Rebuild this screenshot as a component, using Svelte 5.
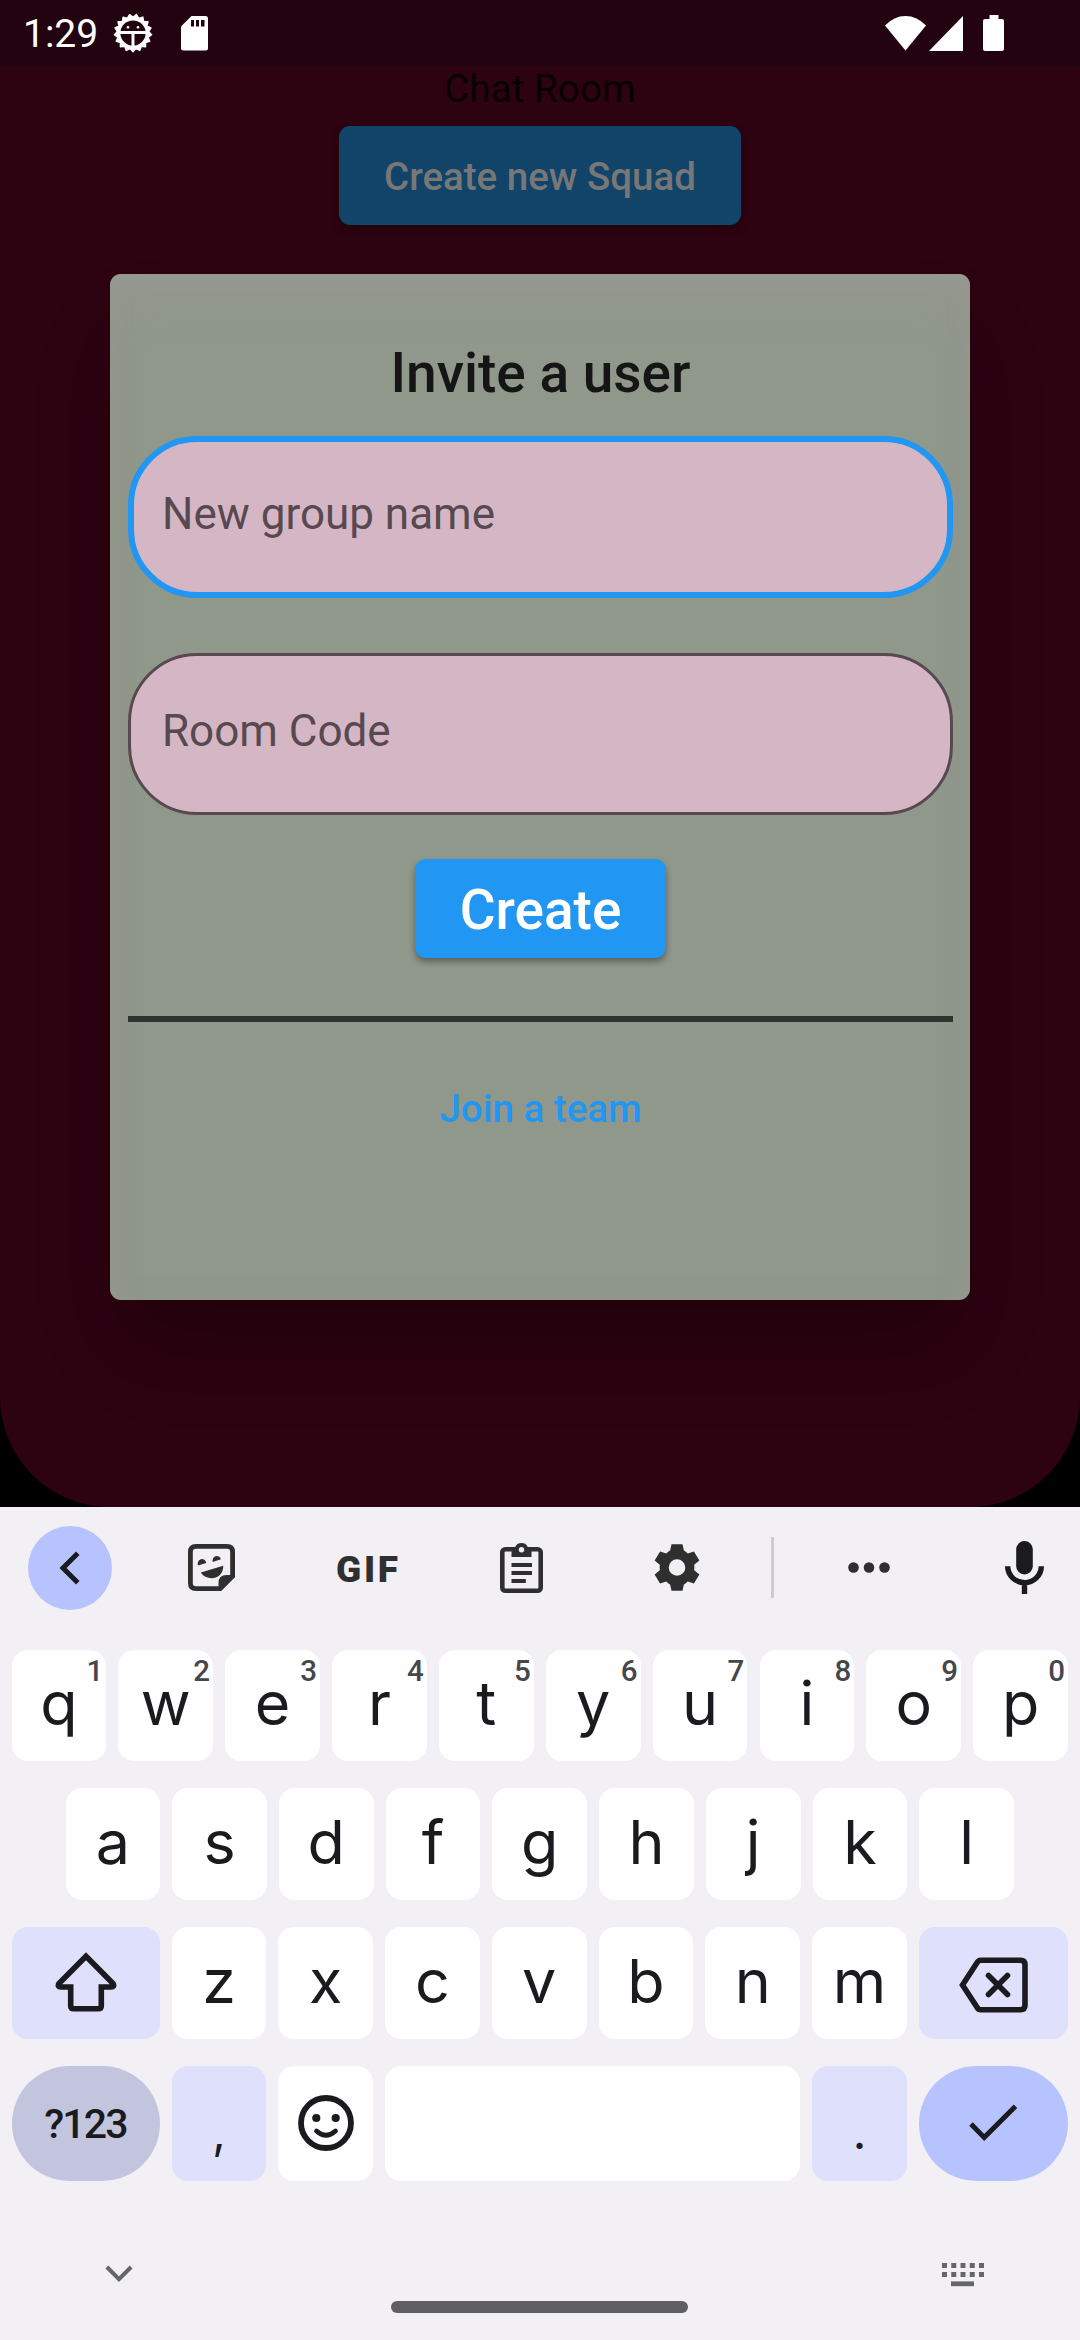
<script>
  const topRow = [...'qwertyuiop'].map((letter, i) => ({ letter, hint: String((i + 1) % 10) }));
  const homeRow = [...'asdfghjkl'];
  const bottomRow = [...'zxcvbnm'];

  // Spiked outline of the debug badge
  const teeth = 17;
  const spikes = Array.from({ length: teeth * 2 }, (_, i) => {
    const angle = (Math.PI * i) / teeth + Math.PI / 2;
    const r = i % 2 ? 15.6 : 18.6;
    return `${(20 + r * Math.cos(angle)).toFixed(2)},${(20 + r * Math.sin(angle)).toFixed(2)}`;
  }).join(' ');
</script>

<div class="phone">
  <div class="app-frame">
    <div class="app">
      <header class="status">
        <span class="time">1:29</span>
        <svg class="bug" width="40" height="40" viewBox="0 0 40 40">
          <polygon points={spikes} fill="#fff" stroke="#fff" stroke-width="1.6" stroke-linejoin="round" />
          <circle cx="20" cy="20" r="12.6" fill="#22030f" />
          <path d="M7 19.6H33M20 20V33" stroke="#fff" stroke-width="3" />
          <circle cx="15" cy="14.2" r="1.3" fill="#fff" />
          <circle cx="25" cy="14.2" r="1.3" fill="#fff" />
        </svg>
        <svg class="sd" width="27" height="35" viewBox="0 0 27 35">
          <path d="M10.500 0H24.500Q27 0 27 2.500V32Q27 34.500 24.500 34.500H2.500Q0 34.500 0 32V10.500Z" fill="#fff" />
          <path d="M10 4h3v6.500h-3zM15 4h3v6.500h-3zM20 4h3.500v6.500H20z" fill="#22030f" />
        </svg>
        <div class="status-right">
          <svg width="41" height="35" viewBox="0 0 41 35">
            <path d="M0 9.500Q9 0 20.500 0T41 9.500L20.500 34.500Z" fill="#fff" />
          </svg>
          <svg class="signal" width="34" height="35" viewBox="0 0 34 35">
            <path d="M34 0V35H0Z" fill="#fff" />
          </svg>
          <svg class="battery" width="21" height="36" viewBox="0 0 21 36">
            <path d="M6.500 0h9v4H19q2 0 2 2v28q0 2-2 2H2q-2 0-2-2V6q0-2 2-2h4.500z" fill="#fff" />
          </svg>
        </div>
      </header>

      <div class="room-title">Chat Room</div>
      <button class="squad">Create new Squad</button>

      <section class="dialog">
        <h1>Invite a user</h1>
        <div class="field focused">New group name</div>
        <div class="field second">Room Code</div>
        <button class="create">Create</button>
        <hr />
        <a class="join" href="#join">Join a team</a>
      </section>
    </div>
  </div>

  <div class="keyboard">
    <div class="toolbar">
      <span class="back">
        <svg width="22" height="34" viewBox="0 0 22 34">
          <path d="M18.800 2.200L4 17L18.800 31.800" fill="none" stroke="#1b1b1f" stroke-width="5" />
        </svg>
      </span>
      <svg width="47" height="47" viewBox="0 0 47 47" fill="#2f2f2f">
        <path d="M8 2.400H39Q44.600 2.400 44.600 8V32L32 44.600H8Q2.400 44.600 2.400 39V8Q2.400 2.400 8 2.400Z" fill="none" stroke="#2f2f2f" stroke-width="4.800" />
        <path d="M47 31V33L33 47H30.500V39Q30.500 31 38.500 31Z" />
        <path d="M10 21.500A4.300 4.600 0 1 1 18.200 19Z" />
        <path d="M24.700 18A4.300 4.600 0 1 1 33 15.300Z" />
        <path d="M12.800 28.500L35.300 21.800C35 37 18 37 12.800 28.500Z" />
      </svg>
      <svg width="72" height="52" viewBox="0 0 72 52">
        <text class="gif" x="5" y="39.500" textLength="62" lengthAdjust="spacing">GIF</text>
      </svg>
      <svg width="43" height="51" viewBox="0 0 43 51" fill="#2f2f2f">
        <rect x="2.300" y="7.300" width="38.400" height="41.400" rx="3" fill="none" stroke="#2f2f2f" stroke-width="4.600" />
        <path d="M11.500 5.500H15A7 7 0 0 1 28 5.500H31.500V15H11.500Z" />
        <circle cx="21.500" cy="7.800" r="2.700" fill="#f2f0f5" />
        <path d="M11.500 21h20.500v4H11.500zM11.500 29h20.500v4H11.500zM11.500 37h14.300v4H11.500z" />
      </svg>
      <svg width="46" height="47" viewBox="-23 -23.5 46 47">
        <path fill="#2f2f2f" fill-rule="evenodd" d="M-5.500-23.200H5.500L6.900-17Q9-16 10.700-14L16.900-16L22.400-7L17.200-2.700Q17.600 0 17.200 2.700L22.400 7L16.900 16L10.700 14Q9 16 6.900 17L5.500 23.200H-5.500L-6.900 17Q-9 16-10.700 14L-16.900 16L-22.400 7L-17.200 2.700Q-17.600 0-17.200-2.700L-22.400-7L-16.900-16L-10.700-14Q-9-16-6.900-17ZM8.300 0A8.300 8.300 0 1 0-8.300 0A8.300 8.300 0 1 0 8.300 0Z" />
      </svg>
      <span class="separator"></span>
      <svg width="42" height="11" viewBox="0 0 42 11" fill="#2f2f2f">
        <circle cx="5.500" cy="5.500" r="5.300" /><circle cx="21" cy="5.500" r="5.300" /><circle cx="36.500" cy="5.500" r="5.300" />
      </svg>
      <svg class="mic" width="39" height="53" viewBox="0 0 39 53">
        <rect x="11.200" y="0" width="16.600" height="33.500" rx="8.300" fill="#1b1b1f" />
        <path d="M2.700 25.300A16.800 16.300 0 0 0 36.300 25.300M19.500 42V53" fill="none" stroke="#1b1b1f" stroke-width="5.400" />
      </svg>
    </div>

    <div class="keys">
      <div class="row first">
        {#each topRow as key}
          <div class="key">{key.letter}<span class="hint">{key.hint}</span></div>
        {/each}
      </div>
      <div class="row home">
        {#each homeRow as letter}
          <div class="key">{letter}</div>
        {/each}
      </div>
      <div class="row with-mods">
        <div class="key mod">
          <svg width="62" height="60" viewBox="0 0 62 60">
            <path d="M31 4.200L4 31.500Q2 35 6 35H15.700V54Q15.700 56.700 18.500 56.700H43.500Q46.300 56.700 46.300 54V35H56Q60 35 58 31.500Z" fill="none" stroke="#1b1b1f" stroke-width="5.600" />
          </svg>
        </div>
        {#each bottomRow as letter}
          <div class="key">{letter}</div>
        {/each}
        <div class="key mod">
          <svg class="erase" width="69" height="56" viewBox="0 0 69 56" fill="none" stroke="#1b1b1f" stroke-width="5.600">
            <path d="M21.500 3.300H61.500Q66 3.300 66 7.800V48.200Q66 52.700 61.500 52.700H21.500Q19.500 52.700 18 50.200L3.500 28L18 5.800Q19.500 3.300 21.500 3.300Z" />
            <path d="M29.500 18.500L48.500 37.500M48.500 18.500L29.500 37.500" stroke-linecap="round" />
          </svg>
        </div>
      </div>
      <div class="row last">
        <div class="key symbols">?123</div>
        <div class="key mod punct">,</div>
        <div class="key">
          <svg width="56" height="56" viewBox="0 0 56 56">
            <circle cx="28" cy="28" r="25" fill="none" stroke="#1b1b1f" stroke-width="5.800" />
            <circle cx="18.300" cy="23" r="4.100" fill="#1b1b1f" />
            <circle cx="37.700" cy="23" r="4.100" fill="#1b1b1f" />
            <path d="M18.500 36Q28 44.500 37.500 36" fill="none" stroke="#1b1b1f" stroke-width="4.800" stroke-linecap="round" />
          </svg>
        </div>
        <div class="key space"></div>
        <div class="key mod punct">.</div>
        <div class="key enter">
          <svg width="49" height="38" viewBox="0 0 49 38">
            <path d="M2 20L15.200 33.500L46.500 2.200" fill="none" stroke="#1b1b1f" stroke-width="5" />
          </svg>
        </div>
      </div>
    </div>

    <footer class="nav">
      <svg class="collapse" width="28" height="18" viewBox="0 0 28 18">
        <path d="M1.900 2L14 14.200L26.100 2" fill="none" stroke="#666" stroke-width="4" />
      </svg>
      <span class="pill"></span>
      <svg class="switcher" width="42" height="24" viewBox="0 0 42 24">
        <path d="M0 2.500H42M0 11.500H42" stroke="#666" stroke-width="5" stroke-dasharray="5 4.250" />
        <path d="M9 20.800H32" stroke="#666" stroke-width="4.800" />
      </svg>
    </footer>
  </div>
</div>

<style>
  :global(body) {
    margin: 0;
    background: #000;
  }

  .phone {
    width: 1080px;
    height: 2340px;
    display: flex;
    flex-direction: column;
    font-family: Roboto, "Liberation Sans", sans-serif;
    overflow: hidden;
  }

  svg {
    display: block;
    flex: none;
  }

  button {
    border: 0;
    padding: 2px 0 0;
    font-family: inherit;
    font-weight: 500;
  }

  .app-frame {
    height: 1507px;
    background: #000;
    flex: none;
  }

  .app {
    height: 1507px;
    background: #2d0211;
    border-radius: 0 0 110px 110px;
    overflow: hidden;
    display: flex;
    flex-direction: column;
    align-items: center;
  }

  .status {
    width: 1080px;
    height: 66px;
    box-sizing: border-box;
    background: #22030f;
    display: flex;
    align-items: center;
    padding: 0 76px 0 23px;
    color: #fff;
    flex: none;
  }

  .time {
    width: 90px;
    padding-top: 2px;
    font-size: 39px;
  }

  .sd {
    margin-left: 28px;
  }

  .status-right {
    margin-left: auto;
    display: flex;
    align-items: center;
  }

  .signal {
    margin-left: 3.500px;
  }

  .battery {
    margin-left: 20px;
  }

  .room-title {
    height: 60px;
    line-height: 46px;
    font-size: 38.5px;
    letter-spacing: 0.1px;
    color: #080003;
    flex: none;
  }

  .squad {
    width: 402px;
    height: 99px;
    border-radius: 11px;
    background: #114468;
    color: #777;
    font-size: 38.5px;
    box-shadow: 0 4px 8px #24020d;
    flex: none;
  }

  .dialog {
    width: 860px;
    height: 1026px;
    margin-top: 48.500px;
    padding: 67.500px 17px 0 18px;
    box-sizing: border-box;
    border-radius: 11px;
    background: #90978b;
    box-shadow:
      0 54px 76px -14px rgba(0, 0, 0, 0.28),
      inset 0 36px 50px -20px rgba(164, 158, 154, 0.35),
      inset 0 0 20px rgba(150, 154, 146, 0.5);
    display: flex;
    flex-direction: column;
    align-items: center;
    flex: none;
  }

  h1 {
    margin: 0 0 31px;
    font-size: 55px;
    line-height: 64px;
    font-weight: 500;
    color: #141514;
  }

  .field {
    width: 825px;
    height: 162px;
    box-sizing: border-box;
    border: 3px solid #57494f;
    border-radius: 69px;
    background: #d5b6c5;
    color: #57494f;
    font-size: 44px;
    line-height: 151px;
    padding: 0 31px;
    flex: none;
  }

  .field.focused {
    border: 6px solid #2196f3;
    padding: 0 28px;
    line-height: 145px;
  }

  .second {
    margin-top: 55px;
  }

  .create {
    width: 251px;
    height: 99px;
    margin-top: 44px;
    padding-top: 3px;
    border-radius: 11px;
    background: #2196f3;
    color: #fff;
    font-size: 55px;
    box-shadow: 0 4px 6px rgba(0, 0, 0, 0.35);
    flex: none;
  }

  hr {
    width: 825px;
    height: 5.500px;
    margin: 58px 0 64px;
    border: 0;
    background: #2f332f;
    flex: none;
  }

  .join {
    font-size: 38.5px;
    line-height: 46px;
    font-weight: 500;
    color: #2196f3;
    text-decoration: none;
  }

  .keyboard {
    height: 833px;
    background: #f2f0f5;
    color: #1b1b1f;
    display: flex;
    flex-direction: column;
    flex: none;
  }

  .toolbar {
    height: 121px;
    display: grid;
    grid-template-columns: 140px 143px 167px 143px 167px 25px 167px 128px;
    align-items: center;
    justify-items: center;
    margin-bottom: 22px;
  }

  .back {
    width: 84px;
    height: 84px;
    border-radius: 50%;
    background: #b6c3ff;
    display: grid;
    place-items: center;
  }

  .gif {
    font-family: Roboto, sans-serif;
    font-size: 37px;
    font-weight: 900;
    fill: #2f2f2f;
  }

  .separator {
    width: 3px;
    height: 61px;
    background: #cccbd0;
  }

  .mic {
    margin-left: 17px;
  }

  .keys {
    display: grid;
    grid-template-rows: 111px 112px 112px 115px;
    row-gap: 27px;
    padding: 0 12px 0 11.500px;
  }

  .row {
    display: grid;
    grid-auto-flow: column;
    grid-auto-columns: 1fr;
    column-gap: 12.200px;
  }

  .home {
    padding: 0 54px;
  }

  .with-mods {
    grid-template-columns: 148px repeat(7, 1fr) 149px;
  }

  .last {
    grid-template-columns: 148px 94.600px 94.600px 1fr 94.600px 149px;
  }

  .key {
    position: relative;
    border-radius: 16px;
    background: #fff;
    display: flex;
    align-items: center;
    justify-content: center;
    box-sizing: border-box;
    padding-bottom: 5px;
    font-family: Inter, Roboto, sans-serif;
    font-size: 61px;
    line-height: 70px;
  }

  .key svg {
    margin-top: 3px;
  }

  .key .erase {
    margin-top: 8px;
  }

  .hint {
    position: absolute;
    top: 3px;
    right: 3px;
    font-family: Roboto, sans-serif;
    font-size: 29.5px;
    font-weight: 500;
    line-height: 36px;
    color: #46474b;
  }

  .mod {
    background: #dfe0fb;
  }

  .symbols {
    border-radius: 58px;
    background: #c3c5df;
    font-family: Roboto, sans-serif;
    font-size: 41px;
    font-weight: 500;
    letter-spacing: -1.800px;
    padding-bottom: 0;
  }

  .punct {
    font-size: 47px;
    padding: 16px 0 0;
  }

  .enter {
    border-radius: 58px;
    background: #b6c3ff;
  }

  .nav {
    flex: 1;
    display: grid;
    grid-template-columns: 105px 28px 258px 297px 254px 42px;
    align-items: start;
    padding-top: 82px;
  }

  .collapse {
    grid-column: 2;
    margin-top: 2px;
  }

  .pill {
    grid-column: 4;
    height: 12px;
    margin-top: 38px;
    border-radius: 6px;
    background: #606062;
  }

  .switcher {
    grid-column: 6;
  }
</style>
